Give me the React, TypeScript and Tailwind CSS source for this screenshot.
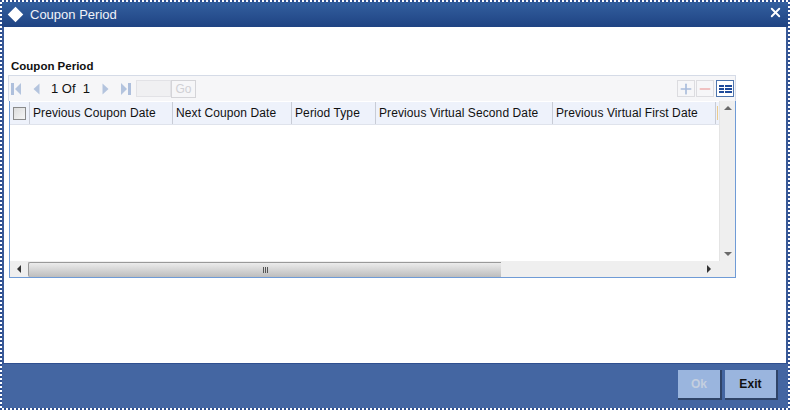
import { Minus, Plus, X } from 'lucide-react';

const columns = [
  { label: 'Previous Coupon Date', width: 'w-[143px]' },
  { label: 'Next Coupon Date', width: 'w-[119px]' },
  { label: 'Period Type', width: 'w-[84px]' },
  { label: 'Previous Virtual Second Date', width: 'w-[177px]' },
  { label: 'Previous Virtual First Date', width: 'w-[163px]' },
];

function Pager({ flip, bar }: { flip?: boolean; bar?: boolean }) {
  return (
    <svg width="13" height="14" viewBox="0 0 13 14" className={flip ? 'rotate-180' : ''}>
      {bar && <rect x="1" y="1" width="3" height="12" fill="#aebfdc" />}
      <path d={bar ? 'M11 1v12L5 7z' : 'M9.500 1.500v11L3.500 7z'} fill="#b4c4de" />
    </svg>
  );
}

export default function App() {
  return (
    <div className="w-[790px] h-[410px] border-2 border-dotted border-[#2f4f8f] bg-white flex flex-col font-['Liberation_Sans',Arial,sans-serif] text-[12px] tracking-[0.1px] text-[#111] overflow-hidden">
      {/* Title bar */}
      <div className="h-[25px] shrink-0 flex items-center bg-gradient-to-b from-[#34609f] to-[#1f4383] text-white pl-[6px] pr-[3px]">
        <span className="w-[11px] h-[11px] rotate-45 bg-white ml-[2px]" />
        <span className="ml-[9px] text-[13px] tracking-normal text-[#f0f3f9]">Coupon Period</span>
        <X className="ml-auto mb-[5px] mr-[2px]" size={15} strokeWidth={3} />
      </div>

      {/* Body */}
      <div className="flex-1 min-h-0 border-x-2 border-[#3a5a98] pt-[32px] pl-[4px]">
        <div className="font-bold h-[16px] leading-[15px] pl-[3px] text-[11.5px] tracking-normal">Coupon Period</div>

        <div className="w-[728px]">
          {/* Toolbar */}
          <div className="h-[26px] flex items-center bg-[#f6f6f8] border border-b-0 border-[#d5dbe7] pl-[1px] pr-[1px]">
            <Pager bar />
            <span className="ml-[7px]"><Pager /></span>
            <span className="ml-[8px] text-[13px] whitespace-pre tracking-normal">1 Of  1</span>
            <span className="ml-[9px]"><Pager flip /></span>
            <span className="ml-[7px]"><Pager flip bar /></span>
            <span className="ml-[4px] w-[35px] h-[17px] bg-[#f0f0f2] border border-[#e2e2e6]" />
            <span className="w-[25px] h-[18px] border border-[#d4d4d8] text-[#d0d0d4] flex items-center justify-center text-[12px]">Go</span>
            <span className="ml-auto w-[18px] h-[17px] border border-[#dcdce0] flex items-center justify-center">
              <Plus size={16} strokeWidth={2.5} className="text-[#a9bcdb]" />
            </span>
            <span className="ml-[1px] w-[18px] h-[17px] border border-[#dcdce0] flex items-center justify-center">
              <Minus size={16} strokeWidth={2.5} className="text-[#eeb0ae]" />
            </span>
            <span className="ml-[2px] w-[18px] h-[17px] border border-[#4d74ad] bg-white flex flex-col justify-center items-center gap-[1px]">
              {[0, 1, 2].map((row) => (
                <span key={row} className="flex gap-[1px]">
                  <span className="w-[5px] h-[2px] bg-[#1e4a9a]" />
                  <span className="w-[7px] h-[2px] bg-[#1e4a9a]" />
                </span>
              ))}
            </span>
          </div>

          {/* Grid */}
          <div className="ml-[1px] h-[177px] border-l border-r border-b border-[#6f9bd6] flex flex-col">
            <div className="flex-1 min-h-0 flex">
              <div className="flex-1 min-w-0">
                <div className="h-[23px] mt-[1px] flex bg-[#eef2fb] border-b border-[#dfe3ec]">
                  <div className="w-[20px] shrink-0 border-r border-[#c8ccd6] flex items-center justify-center">
                    <span className="w-[13px] h-[13px] border border-[#8a8a8a] bg-gradient-to-br from-[#dcdcdc] to-[#f6f6f6]" />
                  </div>
                  {columns.map((col) => (
                    <div key={col.label} className={`${col.width} shrink-0 border-r border-[#c8ccd6] pl-[3px] leading-[23px] whitespace-nowrap`}>
                      {col.label}
                    </div>
                  ))}
                  <div className="flex-1 flex items-center pl-[1px]">
                    <span className="w-[1px] h-[14px] bg-[#eccb8c]" />
                  </div>
                </div>
              </div>
              {/* Vertical scrollbar */}
              <div className="w-[16px] shrink-0 bg-[#efefef] flex flex-col items-center justify-between py-[5px] border-l border-[#e4e4e4]">
                <span className="border-x-[4px] border-x-transparent border-b-[4px] border-b-[#6a6a6a]" />
                <span className="border-x-[4px] border-x-transparent border-t-[4px] border-t-[#6a6a6a]" />
              </div>
            </div>

            {/* Horizontal scrollbar */}
            <div className="h-[16px] shrink-0 bg-[#efefef] flex items-center">
              <div className="w-[18px] flex justify-center">
                <span className="border-y-[4px] border-y-transparent border-r-[4px] border-r-[#333]" />
              </div>
              <div className="w-[473px] h-[15px] flex items-center justify-center gap-[1px] border-t border-l border-[#999] rounded-l-[2px] bg-gradient-to-b from-[#ececec] to-[#bdbdbd]">
                <span className="w-[1px] h-[6px] bg-[#555]" />
                <span className="w-[1px] h-[6px] bg-[#555]" />
                <span className="w-[1px] h-[6px] bg-[#555]" />
              </div>
              <div className="ml-auto mr-[24px]">
                <span className="block border-y-[4px] border-y-transparent border-l-[4px] border-l-[#333]" />
              </div>
            </div>
          </div>
        </div>
      </div>

      {/* Footer */}
      <div className="h-[45px] shrink-0 bg-[#4466a2] border-t border-[#2f4f8f] flex items-center justify-end gap-[3px] pr-[10px] pb-[2px]">
        <button className="w-[44px] h-[30px] bg-[#9ab5de] border-b-2 border-r-2 border-[#2f4468] font-bold text-[#c4cfdf]">Ok</button>
        <button className="w-[53px] h-[30px] bg-[#9ab5de] border-b-2 border-r-2 border-[#2f4468] font-bold text-[#111]">Exit</button>
      </div>
    </div>
  );
}
